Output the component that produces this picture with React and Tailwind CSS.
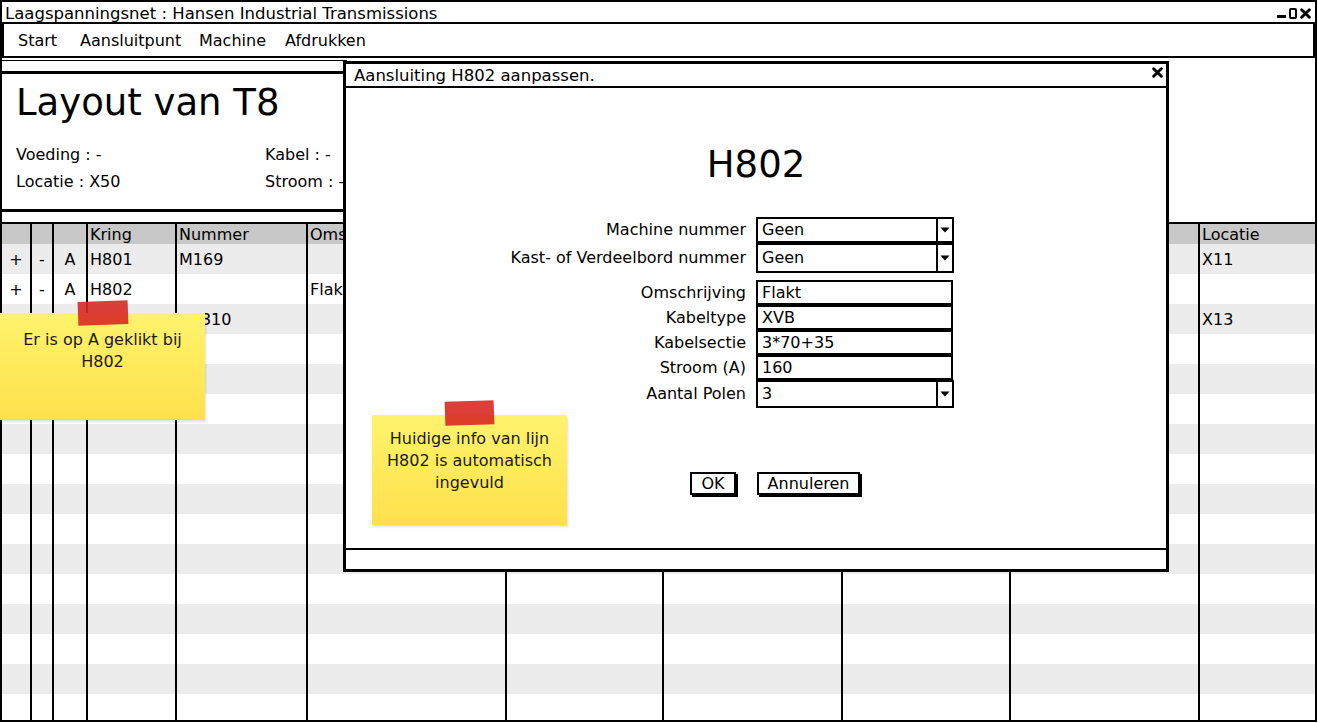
import React from 'react';

const font = "font-['DejaVu_Sans',sans-serif]";

// kolommen achter de dialoog blijven leeg, die zie je toch niet
const headers = ['', '', '', 'Kring', 'Nummer', 'Omschrijving', '', '', '', '', 'Locatie'];

const data = [
  ['+', '-', 'A', 'H801', 'M169', '', '', '', '', '', 'X11'],
  ['+', '-', 'A', 'H802', '', 'Flakt', '', '', '', '', ''],
  ['+', '-', 'A', 'H803', 'VB310', '', '', '', '', '', 'X13'],
];
while (data.length < 16) data.push(['', '', '', '', '', '', '', '', '', '', '']);

const gridCols = 'grid grid-cols-[28px_22px_34px_89px_131px_199px_157px_179px_168px_189px_1fr]';

function Cross({ size = 10 }) {
  return (
    <svg width={size} height={size} viewBox="0 0 10 10">
      <path d="M1.5 1.5 L8.5 8.5 M8.5 1.5 L1.5 8.5" stroke="#000" strokeWidth="2.6" strokeLinecap="round" />
    </svg>
  );
}

function Arrow() {
  return (
    <svg width="10" height="6" viewBox="0 0 10 6">
      <path d="M0.5 0.5 L9.5 0.5 L5 5.5 Z" fill="#000" />
    </svg>
  );
}

function Combo({ value, h }) {
  return (
    <div className={`flex w-[198px] border-2 border-black bg-white ${h}`}>
      <div className="flex flex-1 items-center pl-[4px]">{value}</div>
      <div className="flex w-[16px] items-center justify-center border-l-2 border-black">
        <Arrow />
      </div>
    </div>
  );
}

function Field({ value }) {
  return (
    <div className="flex h-[25px] w-[197px] items-center border-2 border-black bg-white pl-[4px]">{value}</div>
  );
}

function Label({ children, h }) {
  return <div className={`flex items-center justify-end ${h}`}>{children}</div>;
}

function Sticky({ className, tape, children }) {
  return (
    <div className={`absolute ${className}`}>
      <div className="h-full w-full bg-gradient-to-b from-[#fff36e] via-[#ffea5a] to-[#ffe04c] text-center text-[16px] leading-[22px] text-[#1a1a1a] shadow-[1px_2px_2px_rgba(0,0,0,0.12)]">
        {children}
      </div>
      <div className={`absolute bg-[#d82a24]/90 ${tape}`} />
    </div>
  );
}

export default function App() {
  return (
    <div className={`relative h-[723px] w-[1318px] overflow-hidden bg-white text-[16px] text-black ${font}`}>
      <div className="flex h-[722px] w-[1317px] flex-col overflow-hidden border-2 border-black">
        {/* titelbalk */}
        <div className="flex h-[20px] shrink-0 items-start justify-between pl-[3px] pr-[4px]">
          <span className="whitespace-nowrap text-[16.5px] leading-[24px]">Laagspanningsnet : Hansen Industrial Transmissions</span>
          <div className="mt-[6px] flex items-end gap-[3px]">
            <span className="mb-[1px] block h-[3px] w-[9px] bg-black" />
            <span className="block h-[11px] w-[8px] rounded-[2px] border-2 border-black" />
            <Cross size={11} />
          </div>
        </div>

        {/* menu */}
        <div className="flex h-[36px] shrink-0 items-center border-2 border-black pl-[14px] pt-[2px] leading-[30px]">
          <span className="w-[62px]">Start</span>
          <span className="w-[119px]">Aansluitpunt</span>
          <span className="w-[86px]">Machine</span>
          <span>Afdrukken</span>
        </div>

        <div className="h-[2px] shrink-0" />
        <div className="h-[11px] w-[345px] shrink-0 border-t border-black" />

        {/* kop */}
        <div className="h-[141px] w-[1000px] shrink-0 border-y-[3px] border-black pl-[14px]">
          <h1 className="mt-[10px] text-[37px] leading-none">Layout van T8</h1>
          <div className="mt-[20px] grid grid-cols-[249px_1fr] leading-[27px]">
            <span>Voeding : -</span>
            <span>Kabel : -</span>
            <span>Locatie : X50</span>
            <span>Stroom : -</span>
          </div>
        </div>

        <div className="h-[10px] shrink-0" />

        {/* tabel */}
        <div className="flex-1 border-t-2 border-black">
          <div className={`${gridCols} h-[20px] bg-[#c8c8c8] leading-[21px]`}>
            {headers.map((h, i) => (
              <div key={i} className={`overflow-hidden whitespace-nowrap pl-[2px] ${i > 0 ? 'border-l-2 border-black' : ''}`}>
                {h}
              </div>
            ))}
          </div>
          {data.map((row, r) => (
            <div key={r} className={`${gridCols} h-[30px] ${r % 2 === 0 ? 'bg-[#ececec]' : 'bg-white'}`}>
              {row.map((c, i) => (
                <div
                  key={i}
                  className={`overflow-hidden whitespace-nowrap pt-[2px] leading-[28px] ${i > 0 ? 'border-l-2 border-black' : ''} ${i < 3 ? 'text-center' : 'pl-[2px]'}`}
                >
                  {c}
                </div>
              ))}
            </div>
          ))}
        </div>
      </div>

      {/* dialoog */}
      <div className="absolute left-[343px] top-[61px] flex h-[511px] w-[826px] flex-col border-[3px] border-black bg-white">
        <div className="flex h-[24px] shrink-0 items-start justify-between border-b-2 border-black pl-[8px] pr-[3px]">
          <span className="text-[16.5px] leading-[23px]">Aansluiting H802 aanpassen.</span>
          <div className="mt-[3px]">
            <Cross size={11} />
          </div>
        </div>

        <div className="flex flex-1 flex-col">
          <h2 className="mt-[58px] self-center text-[37px] leading-none">H802</h2>

          <div className="ml-[100px] mt-[34px] grid grid-cols-[300px_198px] gap-x-[10px]">
            <Label h="h-[26px]">Machine nummer</Label>
            <Combo value="Geen" h="h-[26px]" />
            <Label h="h-[30px]">Kast- of Verdeelbord nummer</Label>
            <Combo value="Geen" h="h-[30px]" />
            <div className="col-span-2 h-[7px]" />
            <Label h="h-[25px]">Omschrijving</Label>
            <Field value="Flakt" />
            <Label h="h-[25px]">Kabeltype</Label>
            <Field value="XVB" />
            <Label h="h-[25px]">Kabelsectie</Label>
            <Field value="3*70+35" />
            <Label h="h-[25px]">Stroom (A)</Label>
            <Field value="160" />
            <Label h="h-[28px]">Aantal Polen</Label>
            <Combo value="3" h="h-[28px]" />
          </div>

          <div className="ml-[344px] mt-[64px] flex gap-[21px]">
            <button className="h-[23px] w-[46px] border-2 border-black bg-white leading-[19px] shadow-[2px_2px_0_#000]">OK</button>
            <button className="h-[23px] w-[103px] border-2 border-black bg-white leading-[19px] shadow-[2px_2px_0_#000]">Annuleren</button>
          </div>
        </div>

        <div className="h-[21px] shrink-0 border-t-2 border-black" />
      </div>

      {/* notities */}
      <Sticky className="left-0 top-[313px] h-[107px] w-[205px]" tape="left-[78px] top-[-12px] h-[24px] w-[50px] -rotate-2">
        <div className="pt-[16px]">
          Er is op A geklikt bij
          <br />
          H802
        </div>
      </Sticky>
      <Sticky className="left-[372px] top-[415px] h-[110px] w-[195px]" tape="left-[73px] top-[-14px] h-[24px] w-[49px] -rotate-2">
        <div className="pt-[13px]">
          Huidige info van lijn
          <br />
          H802 is automatisch
          <br />
          ingevuld
        </div>
      </Sticky>
    </div>
  );
}
